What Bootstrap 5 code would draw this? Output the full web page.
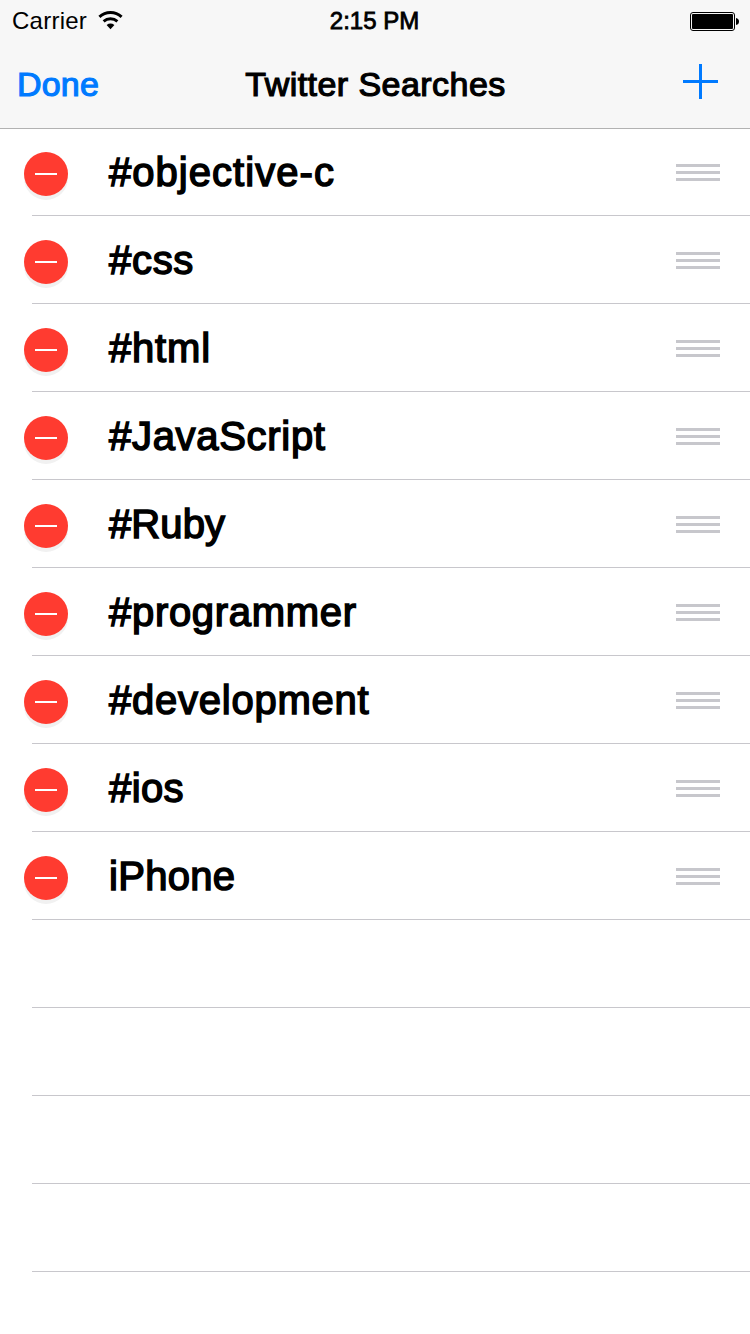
<!DOCTYPE html>
<html lang="en">
<head>
<meta charset="utf-8">
<meta name="viewport" content="width=device-width, initial-scale=1">
<title>Twitter Searches</title>
<link href="https://cdn.jsdelivr.net/npm/bootstrap@5.3.0/dist/css/bootstrap.min.css" rel="stylesheet">
<style>
  body { font-family: "Liberation Sans", Arial, sans-serif; background: #fff; color: #000; height: 1334px; overflow: hidden; }
  svg { display: block; flex: none; }
  .top-area { height: 128px; background: #f7f7f7; box-shadow: 0 1px 0 #b2b2b2; position: relative; z-index: 1; }
  .status-row { height: 40px; font-size: 24px; line-height: 40px; padding: 1px 11px 0 12px; }
  .title-row { height: 88px; font-size: 34px; line-height: 88px; padding: 0 16px 0 17px; }
  .medium { -webkit-text-stroke: 1.2px currentColor; }
  .clock { -webkit-text-stroke: .8px currentColor; margin: 0 1px 0 -1px; }
  .carrier { letter-spacing: .25px; }
  .wifi { margin: 0 0 1px 11px; }
  .done { color: #007aff; text-decoration: none; letter-spacing: .2px; }
  .heading { font-size: 34px; line-height: 88px; font-weight: 400; letter-spacing: .45px; }
  .plus { margin: 24px 16px 0 0; }
  .search-row { height: 88px; padding: 0 30px 0 24px; background: linear-gradient(#c8c7cc, #c8c7cc) 32px 100% / 100% 1px no-repeat; }
  .search-name { font-size: 40px; line-height: 88px; margin-left: 41px; -webkit-text-stroke: 1.5px currentColor; }
  .delete-dot { width: 44px; height: 44px; margin-top: 4px; background: #ff3b30; box-shadow: 0 4px 0 #f1f1f1; }
</style>
</head>
<body>
<header class="top-area">
  <div class="status-row row g-0">
    <div class="col d-flex align-items-center">
      <span class="carrier">Carrier</span>
      <svg class="wifi" width="25" height="19" viewBox="0 0 25 19"><g fill="none" stroke="#000" stroke-width="2.9"><path d="M1.4 5.9a16.4 16.4 0 0 1 22.2 0"/><path d="M5.6 10.3a10.6 10.6 0 0 1 13.8 0"/></g><path d="M8.6 14a6.5 6.5 0 0 1 7.8 0L12.5 18.2z"/></svg>
    </div>
    <div class="col-auto clock">2:15 PM</div>
    <div class="col d-flex align-items-center justify-content-end">
      <svg width="49" height="19" viewBox="0 0 49 19"><rect x=".5" y=".5" width="44" height="18" rx="2.5" fill="none" stroke="#000"/><rect x="2" y="2" width="41" height="15" rx="1"/><path d="M46 6q3 .5 3 3.5t-3 3.5z"/></svg>
    </div>
  </div>
  <nav class="title-row row g-0">
    <div class="col"><a class="done medium" href="#">Done</a></div>
    <h1 class="col-auto heading medium mb-0">Twitter Searches</h1>
    <div class="col d-flex justify-content-end align-items-start">
      <svg class="plus" width="35" height="35" viewBox="0 0 35 35" fill="#007aff"><path d="M16 0h3v16h16v3H19v16h-3V19H0v-3h16z"/></svg>
    </div>
  </nav>
</header>
<main id="searches"></main>
<script src="https://cdn.jsdelivr.net/npm/bootstrap@5.3.0/dist/js/bootstrap.bundle.min.js"></script>
<script>
  // Each entry: label and its tracking in pixels
  const searches = [
    ['#objective-c', 1.04], ['#css', .7], ['#html', .8], ['#JavaScript', .7], ['#Ruby', .1],
    ['#programmer', .7], ['#development', .76], ['#ios', .4], ['iPhone', .3], [], [], [], []
  ];
  document.getElementById('searches').innerHTML = searches.map(([name, tracking]) => `<div class="search-row d-flex align-items-center">${name ? `
    <span class="delete-dot rounded-circle d-flex align-items-center justify-content-center"><svg width="22" height="2"><rect width="22" height="2" fill="#fff"/></svg></span>
    <span class="search-name" style="letter-spacing:${tracking}px">${name}</span>
    <svg class="ms-auto" width="44" height="17" fill="#c7c7cc"><path d="M0 0h44v3H0zM0 7h44v3H0zM0 14h44v3H0z"/></svg>` : ''}</div>`).join('');
</script>
</body>
</html>
